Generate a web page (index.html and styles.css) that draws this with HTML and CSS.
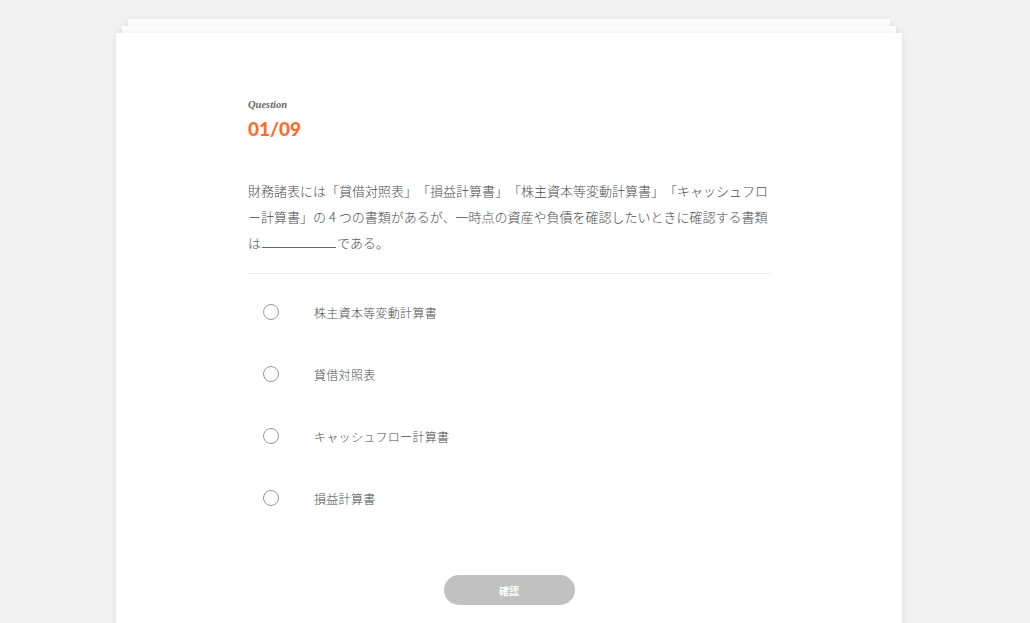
FILE: index.html
```html
<!DOCTYPE html>
<html lang="ja">
<head>
<meta charset="utf-8">
<link rel="stylesheet" href="styles.css">
</head>
<body>
<div class="page">
  <div class="stack">
    <div class="card">
      <div class="content">
        <div class="label">Question</div>
        <div class="num">01/09</div>
        <p class="question">財務諸表には「貸借対照表」「損益計算書」「株主資本等変動計算書」「キャッシュフロー計算書」の <span class="digit">4</span> つの書類があるが、一時点の資産や負債を確認したいときに確認する書類は<span class="blank"></span>である。</p>
        <div class="divider"></div>
        <ul class="options">
          <li class="option"><span class="radio"></span><span class="opt-text">株主資本等変動計算書</span></li>
          <li class="option"><span class="radio"></span><span class="opt-text">貸借対照表</span></li>
          <li class="option"><span class="radio"></span><span class="opt-text">キャッシュフロー計算書</span></li>
          <li class="option"><span class="radio"></span><span class="opt-text">損益計算書</span></li>
        </ul>
        <div class="actions"><button class="confirm">確認</button></div>
      </div>
    </div>
  </div>
</div>
</body>
</html>
```
FILE: styles.css
```css
html, body {
  margin: 0;
  padding: 0;
  background: #f2f2f2;
  overflow: hidden;
}
body {
  font-family: "Noto Sans CJK JP", "Noto Sans", sans-serif;
  color: #555;
}
.page {
  width: 1018px;
  padding-top: 33px;
}
.stack {
  position: relative;
  width: 786px;
  margin: 0 auto;
  isolation: isolate;
}
.stack::before,
.stack::after {
  content: "";
  position: absolute;
  background: #fff;
  height: 60px;
  box-shadow: 0 0 6px rgba(0, 0, 0, 0.07);
}
.stack::before {
  top: -7px;
  left: 6px;
  right: 6px;
  z-index: -1;
}
.stack::after {
  top: -14px;
  left: 12px;
  right: 12px;
  z-index: -2;
}
.card {
  position: relative;
  background: #fff;
  min-height: 640px;
  box-shadow: 0 0 8px rgba(0, 0, 0, 0.08);
}
.content {
  width: 522px;
  margin: 0 auto;
  padding-top: 65px;
}
.label {
  font-family: "Liberation Serif", serif;
  font-style: italic;
  font-weight: bold;
  font-size: 10.5px;
  line-height: 14px;
  color: #666;
}
.num {
  margin-top: 5px;
  font-family: Lato, "Liberation Sans", sans-serif;
  font-weight: 900;
  font-size: 19px;
  line-height: 24px;
  color: #fd6a2b;
}
.question {
  margin: 37px -4px 0 0;
  font-size: 13px;
  line-height: 26px;
  line-break: loose;
  text-spacing-trim: space-all;
  color: #4d4d4d;
  font-weight: 300;
}
.digit {
  font-size: 13px;
}
.blank {
  display: inline-block;
  width: 74px;
  height: 12px;
  border-bottom: 1px solid #666;
  margin: 0 1px;
}
.divider {
  margin-top: 17px;
  border-top: 1px solid #ececec;
}
.options {
  list-style: none;
  margin: 7px 0 0;
  padding: 0;
}
.option {
  display: flex;
  align-items: center;
  height: 62px;
}
.radio {
  box-sizing: border-box;
  width: 16px;
  height: 16px;
  border: 1px solid #999;
  border-radius: 50%;
  margin-left: 15px;
  flex: none;
}
.opt-text {
  margin-left: 35px;
  font-size: 12px;
  letter-spacing: 0.3px;
  font-weight: 300;
  color: #4d4d4d;
}
.actions {
  display: flex;
  justify-content: center;
  margin-top: 46px;
}
.confirm {
  width: 131px;
  height: 30px;
  border: none;
  border-radius: 15px;
  background: #c1c1c1;
  color: #fff;
  font-family: "Noto Sans CJK JP", sans-serif;
  font-weight: bold;
  font-size: 10px;
  padding: 0;
}
```
